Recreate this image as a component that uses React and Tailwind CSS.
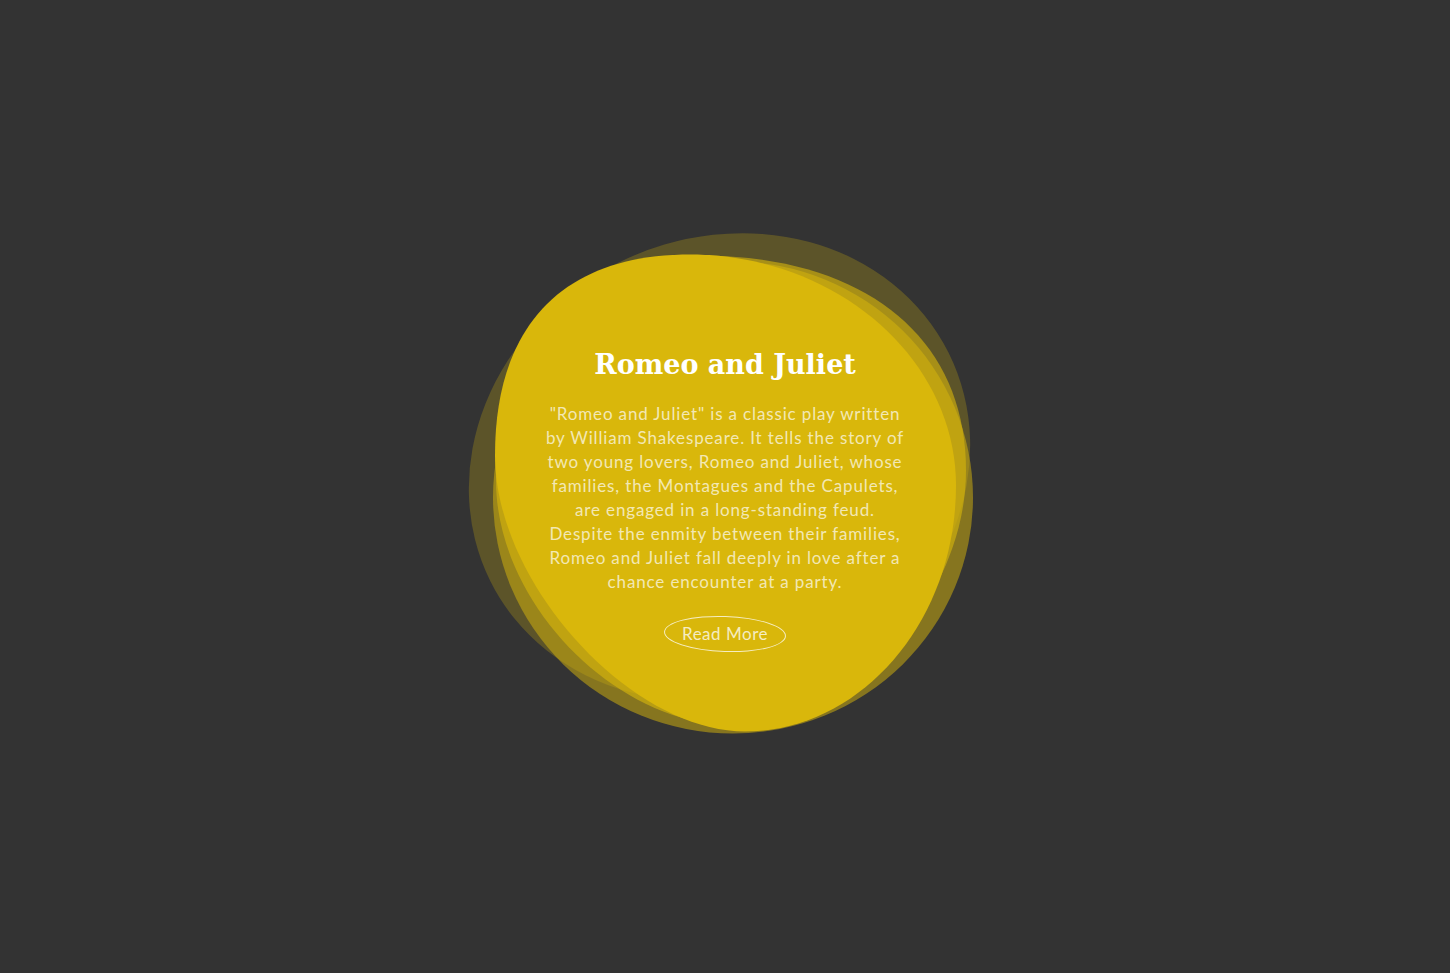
import React from "react";

// smooth 4-point blob: top, right, bottom, left with a handle factor per quadrant
const blob = (T, R, B, L, k) => {
  const [a, b, c, d] = k;
  return [
    `M${T[0]} ${T[1]}`,
    `C${T[0] + a * (R[0] - T[0])} ${T[1]} ${R[0]} ${R[1] - a * (R[1] - T[1])} ${R[0]} ${R[1]}`,
    `C${R[0]} ${R[1] + b * (B[1] - R[1])} ${B[0] + b * (R[0] - B[0])} ${B[1]} ${B[0]} ${B[1]}`,
    `C${B[0] - c * (B[0] - L[0])} ${B[1]} ${L[0]} ${L[1] + c * (B[1] - L[1])} ${L[0]} ${L[1]}`,
    `C${L[0]} ${L[1] - d * (L[1] - T[1])} ${T[0] - d * (T[0] - L[0])} ${T[1]} ${T[0]} ${T[1]}Z`,
  ].join(" ");
};

const YELLOW = "#d9b70b";

const Blobs = () => (
  <svg
    className="absolute inset-0 w-full h-full overflow-visible"
    viewBox="465 226.5 520 520"
  >
    <ellipse cx="719.5" cy="466.5" rx="256" ry="228" fill={YELLOW} opacity="0.25" transform="rotate(-26.5 719.5 466.5)" />
    <ellipse cx="733" cy="497" rx="240" ry="236" fill={YELLOW} opacity="0.5" />
    <path d={blob([700, 255], [966, 470], [735, 725], [496, 480], [0.62, 0.5, 0.5, 0.62])} fill={YELLOW} opacity="0.6" />
    <path d={blob([690, 254], [956, 485], [745, 731], [495, 455], [0.55, 0.55, 0.46, 0.65])} fill={YELLOW} />
  </svg>
);

const lines = [
  "\"Romeo and Juliet\" is a classic play written",
  "by William Shakespeare. It tells the story of",
  "two young lovers, Romeo and Juliet, whose",
  "families, the Montagues and the Capulets,",
  "are engaged in a long-standing feud.",
  "Despite the enmity between their families,",
  "Romeo and Juliet fall deeply in love after a",
  "chance encounter at a party.",
];

export default function App() {
  return (
    <div className="min-h-screen bg-[#333333] flex items-center justify-center">
      <div className="relative w-[520px] h-[520px]">
        <Blobs />
        <div className="relative flex flex-col items-center pt-[118px]">
          <h2 className="text-white text-[27px] leading-10 font-bold font-['DejaVu_Serif',serif]">
            Romeo and Juliet
          </h2>
          <p className="mt-[17px] text-center text-[17px] leading-6 text-white/70 font-['Lato',sans-serif] tracking-[0.05em]">
            {lines.map((l) => (
              <span key={l} className="block whitespace-nowrap">{l}</span>
            ))}
          </p>
          <button className="mt-[22px] h-[36px] w-[122px] rounded-[50%] border-[1.5px] border-white/75 rotate-[2deg] text-white/75 text-[17px] font-['Lato',sans-serif] tracking-[0.03em]">
            <span className="block -rotate-[2deg]">Read More</span>
          </button>
        </div>
      </div>
    </div>
  );
}
